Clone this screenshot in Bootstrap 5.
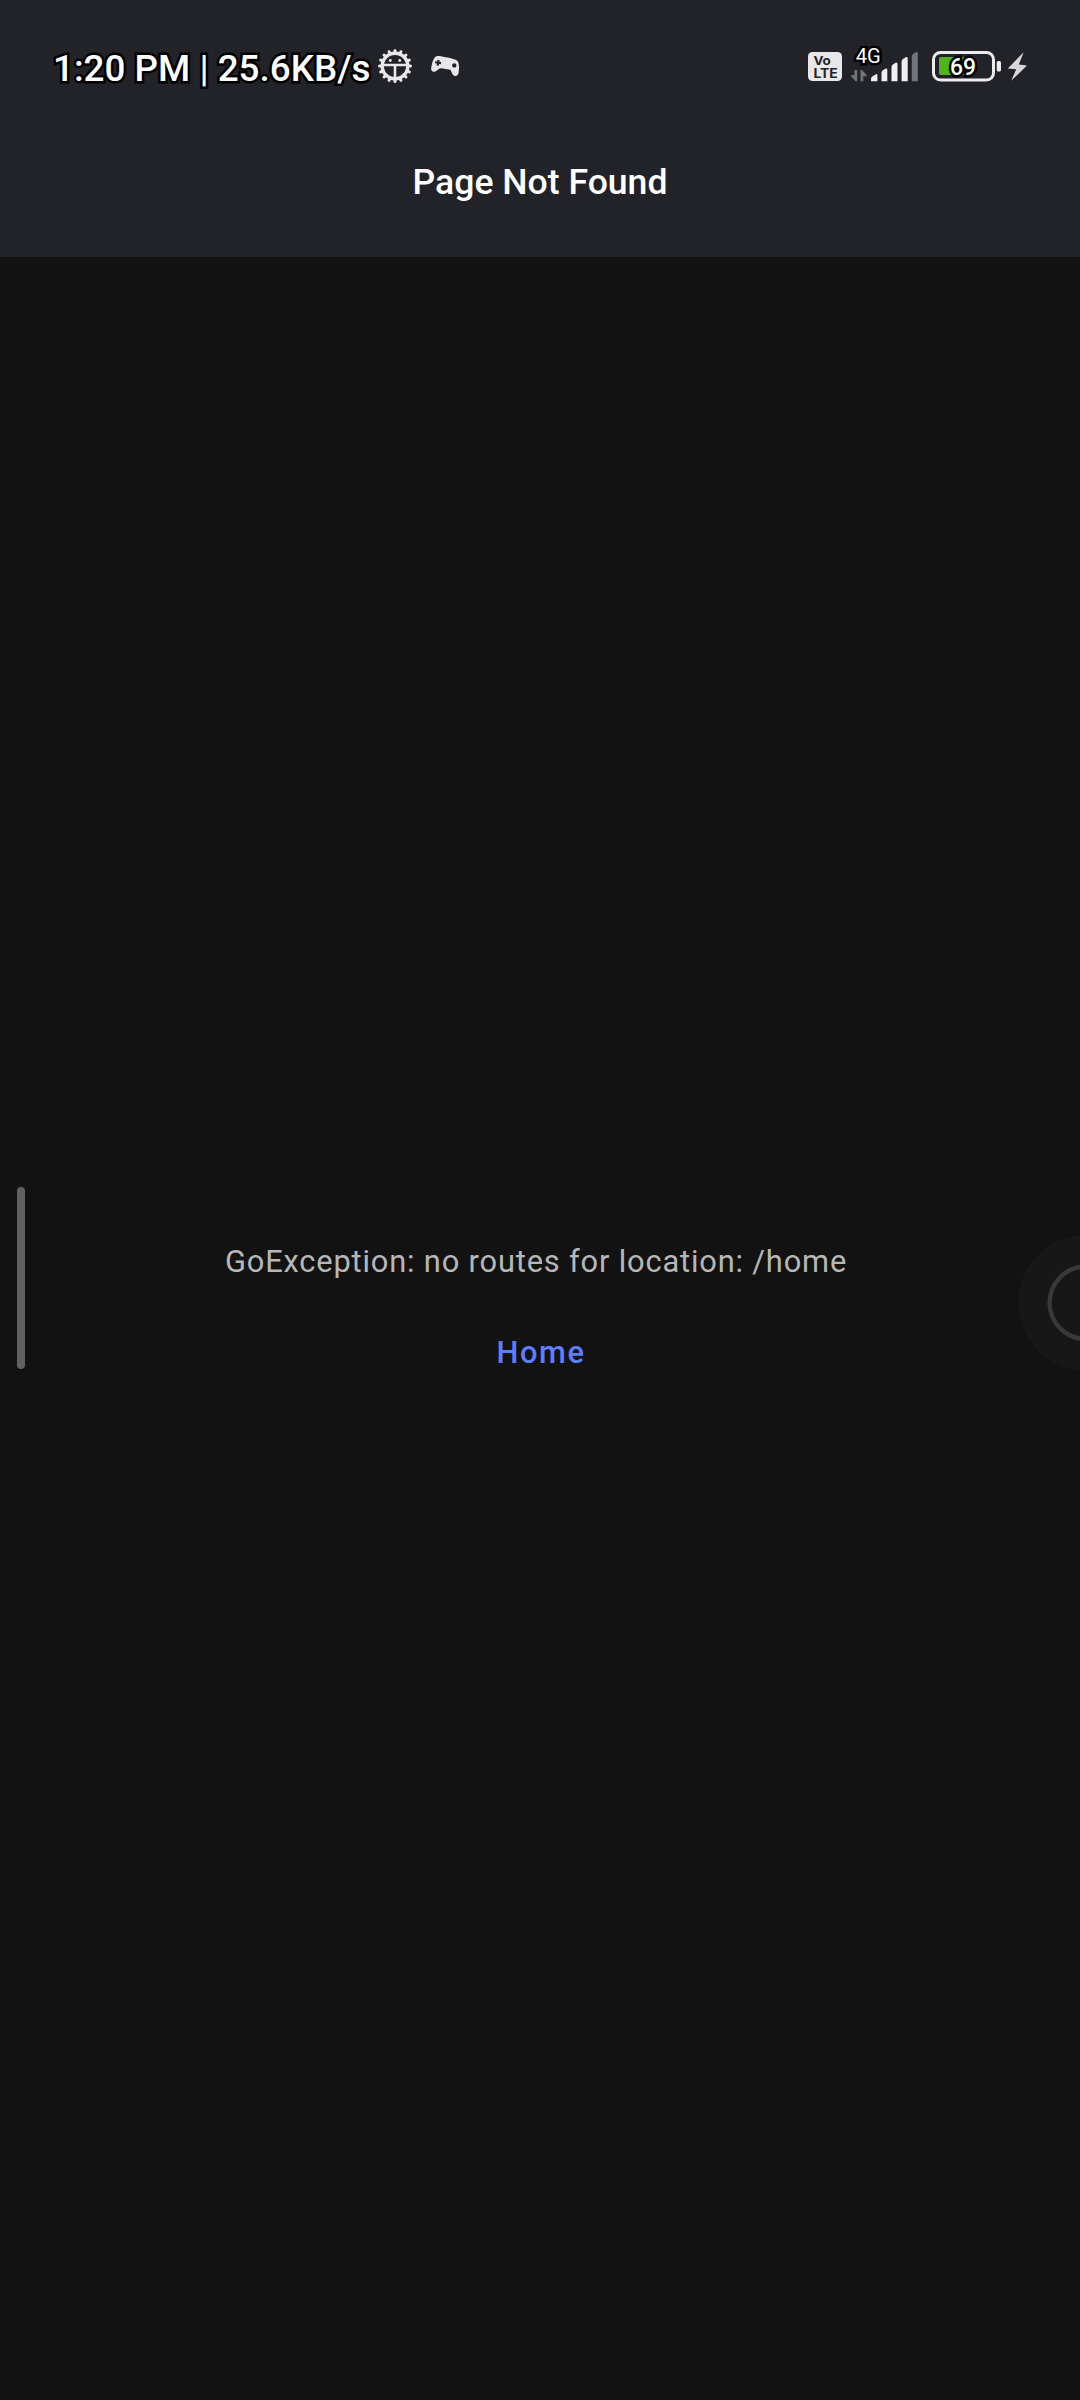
<!DOCTYPE html>
<html lang="en" data-bs-theme="dark">
<head>
<meta charset="utf-8">
<meta name="viewport" content="width=device-width, initial-scale=1">
<title>Page Not Found</title>
<link href="https://cdn.jsdelivr.net/npm/bootstrap@5.3.0/dist/css/bootstrap.min.css" rel="stylesheet">
<style>
body{background:#121212;font-family:Roboto,"Liberation Sans",sans-serif;height:2400px;overflow:hidden}
.app-head{background:#222328;height:257px}
.status-line{height:132px;padding-left:53px;padding-right:52px}
.outlined{paint-order:stroke fill;-webkit-text-stroke:5px #000;color:#fff}
.clock{font-size:36.8px;font-weight:500;line-height:44px;white-space:pre;width:316.5px;padding-top:5px}
.app-title{font-size:35.6px;font-weight:500;line-height:44px;margin:28px 0 0;color:#fff}
.app-main{height:2143px;padding-top:982px}
.message{font-size:30.8px;line-height:46px;letter-spacing:.84px;color:#b7b7b7;margin:0 8px 0 0}
.home-link{font-size:30.8px;line-height:46px;letter-spacing:1.6px;font-weight:500;color:#5f7dff;margin:45px 0 0 2px;padding:0;border:0}
.edge-handle{left:17px;top:1187px;width:8px;height:182px;background:#606060}
.assist{left:1018px;top:1235px}
svg{display:block}
svg text{font-family:Roboto,"Liberation Sans",sans-serif}
svg .volte text{font-family:Inter,Roboto,sans-serif;font-weight:700}
</style>
<script src="https://cdn.jsdelivr.net/npm/bootstrap@5.3.0/dist/js/bootstrap.bundle.min.js"></script>
</head>
<body class="position-relative">
<header class="app-head">
  <div class="status-line d-flex justify-content-between align-items-center">
    <div class="d-flex align-items-center">
      <span class="clock outlined">1:20 PM | 25.6KB/s</span>
      <svg width="92" height="36" viewBox="370 48 92 36" fill="#e8e8e8">
        <g transform="translate(395 66)">
          <circle r="12.8" fill="none" stroke="#e8e8e8" stroke-width="3.4"/>
          <g stroke="#e8e8e8" stroke-width="3" stroke-linecap="round">
            <path id="teeth" d="M0 -15.5V-13M0 15.5V13M-15.5 0H-13M15.5 0H13M-10.96 -10.96L-9.2 -9.2M10.96 10.96L9.2 9.2M-10.96 10.96L-9.2 9.2M10.96 -10.96L9.2 -9.2"/>
            <use href="#teeth" transform="rotate(22.5)"/>
          </g>
          <path d="M-12 -2.2H12V.3H1.3V13H-1.3V.3H-12z"/>
          <circle cx="-4.7" cy="-5.5" r="1.4"/><circle cx="4.7" cy="-5.5" r="1.4"/>
        </g>
        <path fill-rule="evenodd" d="M438 56Q440 55.7 444 57.1Q449 57.7 454 59.2Q457.5 59.8 458.5 63Q459.4 66 458.8 71Q458.6 75.7 455.8 76Q453 76.4 451.3 71.5L450.4 69.8L441.2 68.2Q439 68.2 437.3 70.3Q434.5 72.5 432.5 71.6Q430.6 70.7 431.2 67.5Q432 61.5 434 58.4Q435.8 55.8 438 56zM437.5 59.8L437.2 61.5L435.3 61.2L435 63.3L436.9 63.6L436.6 65.5L438.7 65.8L439 63.9L440.9 64.2L441.2 62.1L439.3 61.8L439.6 60.1zM454.3 63.2A2.2 2.2 0 1 0 454.3 67.6A2.2 2.2 0 1 0 454.3 63.2z"/>
      </svg>
    </div>
    <svg width="220" height="40" viewBox="808 46 220 40">
      <rect x="808" y="52" width="34" height="29" rx="4.5" fill="#e8e8e8"/>
      <g class="volte" fill="#222328">
        <text x="813.4" y="65.2" font-size="12" textLength="17.4" lengthAdjust="spacingAndGlyphs">Vo</text>
        <text x="813.4" y="77.6" font-size="13" textLength="24.4" lengthAdjust="spacingAndGlyphs">LTE</text>
      </g>
      <path d="M857.2 70V81.2H855.6L851.3 76.4V75H854.4V70zM860.5 81.2V70H862L866.6 74.9V76.2H863.3V81.2z" fill="#737477"/>
      <path d="M871 81.3V79Q871 77.2 873 76L875.5 74.5Q877.4 73.4 877.4 75.5V81.3zM881.5 81.3V73Q881.5 71 883.2 70L885.4 68.7Q887.3 67.7 887.3 69.8V81.3zM891.5 81.3V67Q891.5 65.2 893.2 64.2L895.6 62.8Q897.5 61.8 897.5 64V81.3zM901.6 81.3V61.5Q901.6 59.7 903.3 58.7L905.8 57.3Q907.7 56.3 907.7 58.4V81.3z" fill="#f0f0f0"/>
      <path d="M911.8 81.3V56.5Q911.8 54.7 913.5 53.7L915.9 52.3Q917.8 51.3 917.8 53.4V81.3z" fill="#737477"/>
      <text x="855.7" y="63" font-size="19.5" fill="#fff" stroke="#000" stroke-width="5" paint-order="stroke" textLength="25" lengthAdjust="spacingAndGlyphs">4G</text>
      <rect x="933.5" y="52.5" width="60" height="27.5" rx="7" fill="none" stroke="#ececec" stroke-width="3"/>
      <path d="M941 57H965V75H941Q939 75 939 73V59Q939 57 941 57z" fill="#50b516"/>
      <rect x="996.7" y="61" width="4.3" height="10.5" rx="1.6" fill="#ececec"/>
      <text x="949.9" y="75.4" font-size="23.5" font-weight="500" fill="#fff" stroke="#000" stroke-width="5" paint-order="stroke" textLength="26" lengthAdjust="spacingAndGlyphs">69</text>
      <path d="M1023.7 52.3L1007.8 68.4L1016.2 69.2L1011.2 80.8L1027 65.5L1018.8 64.6z" fill="#d8d8d9"/>
    </svg>
  </div>
  <h1 class="app-title text-center">Page Not Found</h1>
</header>
<main class="app-main d-flex flex-column align-items-center">
  <p class="message">GoException: no routes for location: /home</p>
  <a class="btn home-link" href="#">Home</a>
</main>
<div class="edge-handle position-absolute rounded-pill"></div>
<svg class="assist position-absolute" width="62" height="136" viewBox="1018 1235 62 136">
  <circle cx="1085.8" cy="1302.8" r="67.8" fill="#171717"/>
  <circle cx="1085.8" cy="1302.8" r="36.2" fill="none" stroke="#393939" stroke-width="4.4"/>
</svg>
</body>
</html>
